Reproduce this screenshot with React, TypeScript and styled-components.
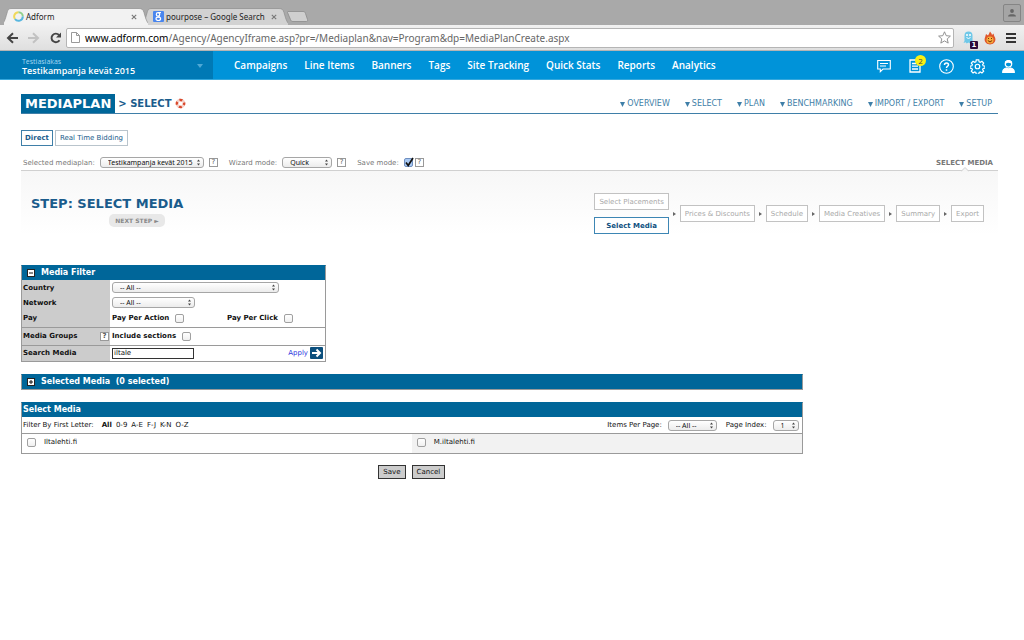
import React from "react";
import styled, { createGlobalStyle } from "styled-components";

const Global = createGlobalStyle`
  * { box-sizing: border-box; }
  body { margin: 0; background: #fff; color: #111; font-family: "DejaVu Sans", Verdana, sans-serif; font-size: 7px; line-height: 10px; }
  button, input, select { font: inherit; margin: 0; padding: 0; color: inherit; }
  a { color: inherit; text-decoration: none; }
`;

/* ---------- browser chrome ---------- */
const TabStrip = styled.div`
  display: flex;
  align-items: flex-end;
  height: 25px;
  padding-left: 4px;
  background: #a9a9a9;
  font-family: "Noto Sans", sans-serif;
  font-size: 8px;
`;
const TabShell = styled.div<{ $active?: boolean }>`
  position: relative;
  display: flex;
  align-items: center;
  width: 144px;
  height: 17px;
  padding: 0 11px 0 9px;
  margin-right: -4px;
  z-index: ${(p) => (p.$active ? 2 : 1)};
  color: #222;
`;
const TabShape = styled.svg`
  position: absolute;
  inset: 0;
  width: 100%;
  height: 100%;
  z-index: -1;
`;
const TabLabel = styled.span`
  flex: 1;
  margin-left: 2px;
  white-space: nowrap;
`;
const TabClose = styled.button`
  display: flex;
  border: 0;
  background: none;
`;
const NewTab = styled.button`
  display: flex;
  align-self: center;
  margin: 8px 0 0 3px;
  border: 0;
  background: none;
`;
const Profile = styled.button`
  display: flex;
  align-items: center;
  justify-content: center;
  width: 18px;
  height: 18px;
  margin: 0 3px 3px auto;
  border: 1px solid #858585;
  border-radius: 2px;
  background: #a5a5a5;
`;
const Toolbar = styled.div`
  display: flex;
  align-items: center;
  height: 26px;
  padding: 0 3px 0 6px;
  background: linear-gradient(#f1f1f1, #dfdfdf);
  border-bottom: 1px solid #b4b4b4;
`;
const IconButton = styled.button`
  display: flex;
  align-items: center;
  justify-content: center;
  width: 20px;
  height: 20px;
  border: 0;
  background: none;
`;
const Address = styled.div`
  display: flex;
  align-items: center;
  flex: 1;
  height: 20px;
  margin-right: 3px;
  padding: 0 2px 0 4px;
  border: 1px solid #b5b5b5;
  border-radius: 2px;
  background: #fff;
  font-family: "Noto Sans", sans-serif;
  font-size: 10px;
  line-height: 16px;
  color: #666;
`;
const Url = styled.a`
  flex: 1;
  margin-left: 5px;
  white-space: nowrap;
  b { font-weight: 400; color: #000; }
`;
const Extension = styled.button`
  position: relative;
  display: flex;
  align-items: center;
  justify-content: center;
  width: 22px;
  height: 20px;
  border: 0;
  background: none;
`;
const CountBadge = styled.span`
  position: absolute;
  right: 1px;
  bottom: -1px;
  width: 8px;
  height: 8px;
  border-radius: 1px;
  background: #2b0a3a;
  color: #fff;
  font-size: 7px;
  font-weight: 700;
  line-height: 8px;
  text-align: center;
`;

/* ---------- application header ---------- */
const Header = styled.header`
  display: flex;
  height: 29px;
  background: #0093d9;
  border-bottom: 1px solid #36a8dd;
  color: #fff;
  font-family: "Open Sans", sans-serif;
`;
const Account = styled.button`
  display: flex;
  align-items: center;
  justify-content: space-between;
  width: 213px;
  padding: 1px 10px 0 22px;
  border: 0;
  background: #0079b5;
  color: #fff;
  text-align: left;
`;
const AccountText = styled.span`
  display: flex;
  flex-direction: column;
  font-size: 9px;
  font-weight: 600;
  line-height: 9px;
  small { font-size: 7px; font-weight: 400; line-height: 9px; color: #a5d8f2; }
`;
const MainNav = styled.nav`
  display: flex;
  align-items: center;
  gap: 17px;
  padding-left: 21px;
  font-size: 10px;
  font-weight: 600;
  white-space: nowrap;
`;
const HeaderTools = styled.div`
  display: flex;
  align-items: center;
  gap: 11px;
  margin-left: auto;
  padding: 2px 6px 0 0;
`;
const Tool = styled(IconButton)`
  position: relative;
  color: #fff;
`;
const Notice = styled.span`
  position: absolute;
  top: -1px;
  right: -1px;
  width: 11px;
  height: 11px;
  border-radius: 50%;
  background: #f8f014;
  color: #444;
  font-size: 8px;
  line-height: 11px;
  text-align: center;
`;

/* ---------- page ---------- */
const Page = styled.main`
  padding: 14px 26px 20px 21px;
`;
const TitleBar = styled.div`
  display: flex;
  justify-content: space-between;
  align-items: flex-end;
  height: 20px;
  border-bottom: 1px solid #3f7fa8;
`;
const Title = styled.h1`
  display: flex;
  align-items: center;
  gap: 3px;
  margin: 0;
  font-size: 10px;
  line-height: 19px;
  color: #1a5c8c;
`;
const TitleTag = styled.span`
  padding: 0 4px;
  background: #006699;
  color: #fff;
  font-size: 13px;
`;
const SubNav = styled.nav`
  display: flex;
  gap: 15px;
  padding-right: 6px;
  line-height: 18px;
  font-size: 8px;
  color: #3f7fa8;
  a { display: flex; align-items: center; gap: 2px; }
`;
const Modes = styled.div`
  display: flex;
  gap: 2px;
  margin-top: 16px;
`;
const Mode = styled.button<{ $active?: boolean }>`
  height: 16px;
  padding: 0 ${(p) => (p.$active ? 3 : 4)}px;
  border: 1px solid ${(p) => (p.$active ? "#3f7fa8" : "#b9c4cc")};
  background: #fff;
  color: #1a5c8c;
  font-weight: ${(p) => (p.$active ? 700 : 400)};
`;
const Options = styled.div`
  display: flex;
  align-items: center;
  height: 25px;
  padding: 9px 5px 0 2px;
  border-bottom: 1px solid #d0d0d0;
  color: #777;
`;
const Option = styled.div`
  display: flex;
  align-items: center;
  gap: 5px;
  margin-right: 11px;
`;
const Crumb = styled.strong`
  position: relative;
  margin-left: auto;
  font-size: 7px;
`;
const Notch = styled.svg`
  position: absolute;
  left: 50%;
  top: 9px;
  margin-left: -4px;
`;
const Help = styled.button`
  width: 9px;
  height: 9px;
  border: 1px solid #999;
  background: #fff;
  color: #555;
  line-height: 7px;
`;
const SelectBox = styled.span<{ $width: number }>`
  position: relative;
  display: inline-flex;
  width: ${(p) => p.$width}px;
  select {
    width: 100%;
    height: 11px;
    padding: 0 7px;
    border: 1px solid #a6a6a6;
    border-radius: 3px;
    background: linear-gradient(#fff, #ececec);
    color: #111;
    appearance: none;
    font-family: "Noto Sans", sans-serif;
    font-size: 7px;
    font-weight: 400;
    line-height: 9px;
  }
  svg { position: absolute; right: 3px; top: 2px; pointer-events: none; }
`;
const Check = styled.input`
  width: 9px;
  height: 9px;
  border: 1px solid #a0a0a0;
  border-radius: 2px;
  background: linear-gradient(#fff, #f0f0f0);
  appearance: none;
`;
const TickBox = styled.span`
  position: relative;
  display: inline-flex;
  margin-right: -3px;
  input { border-color: #6f8fc0; background: #a9c9f3; }
  svg { position: absolute; left: 0; top: -1px; pointer-events: none; }
`;
const StepArea = styled.section`
  display: flex;
  justify-content: space-between;
  height: 94px;
  padding: 22px 14px 0 10px;
  background: linear-gradient(#f7f7f7, #fff 64px);
`;
const StepHead = styled.div`
  display: flex;
  flex-direction: column;
  align-items: center;
  h2 { margin: 3px 0 2px; font-size: 13px; line-height: 16px; color: #1a5c8c; }
`;
const NextStep = styled.button`
  height: 13px;
  margin-left: 60px;
  padding: 0 6px;
  border: 0;
  border-radius: 5px;
  background: #e8e8e8;
  color: #888;
  font-size: 6px;
  font-weight: 700;
`;
const Steps = styled.div`
  display: flex;
  align-items: center;
  gap: 4px;
  height: 41px;
`;
const StepStack = styled.div`
  display: flex;
  flex-direction: column;
  gap: 7px;
`;
const Step = styled.button<{ $active?: boolean }>`
  height: 17px;
  padding: 0 4px;
  border: 1px solid ${(p) => (p.$active ? "#3d86b4" : "#c2c2c2")};
  background: #fff;
  color: ${(p) => (p.$active ? "#0d4f80" : "#a8a8a8")};
  font-weight: ${(p) => (p.$active ? 700 : 400)};
  white-space: nowrap;
`;
const PanelHead = styled.h3<{ $inset?: boolean }>`
  display: flex;
  align-items: center;
  gap: 6px;
  height: 14px;
  margin: 0;
  padding-left: ${(p) => (p.$inset ? 5 : 1)}px;
  background: #006699;
  color: #fff;
  font-size: 8px;
  font-weight: 700;
  white-space: pre;
`;
const Toggle = styled.button`
  display: flex;
  border: 0;
  background: none;
`;
const FilterPanel = styled.section`
  width: 305px;
  border: 1px solid #9a9a9a;
  border-top-color: #006699;
`;
const FilterTable = styled.table`
  width: 100%;
  border-collapse: collapse;
  font-weight: 700;
  th { width: 88px; padding: 0 1px; background: #ccc; text-align: left; }
  td { padding: 0 2px; }
`;
const FilterRow = styled.tr<{ $height: number; $line?: boolean }>`
  height: ${(p) => p.$height}px;
  border-top: ${(p) => (p.$line ? "1px solid #9a9a9a" : "0")};
`;
const Between = styled.div`
  display: flex;
  align-items: center;
  justify-content: space-between;
`;
const Field = styled.label<{ $width?: number }>`
  display: inline-flex;
  align-items: center;
  gap: 6px;
  width: ${(p) => (p.$width ? `${p.$width}px` : "auto")};
`;
const SearchInput = styled.input`
  width: 82px;
  height: 11px;
  padding: 0 1px;
  border: 1px solid #333;
  background: #fff;
  font-weight: 400;
`;
const Apply = styled.button`
  display: flex;
  align-items: center;
  gap: 2px;
  border: 0;
  background: none;
  color: #2a35e0;
  font-weight: 400;
`;
const Wide = styled.section`
  width: 80%;
  margin-top: 12px;
  border: 1px solid #9a9a9a;
  border-top-color: #006699;
`;
const Letters = styled.div`
  display: flex;
  align-items: center;
  gap: 4px;
  height: 16px;
  padding: 0 3px 0 1px;
  b { margin-left: 4px; }
`;
const Paging = styled.div`
  display: flex;
  gap: 9px;
  margin-left: auto;
`;
const MediaTable = styled.table`
  width: 100%;
  border-collapse: collapse;
  border-top: 1px solid #9a9a9a;
  td { width: 50%; height: 19px; padding: 0 5px; }
  td + td { background: #f2f2f2; }
  label { gap: 8px; }
`;
const Actions = styled.div`
  display: flex;
  justify-content: center;
  gap: 6px;
  width: 80%;
  margin-top: 11px;
`;
const Action = styled.button`
  height: 14px;
  padding: 0 4px;
  border: 1px solid #333;
  background: #ccc;
  color: #111;
`;

function Picker({ label, options, width }: { label: string; options: string[]; width: number }) {
  return (
    <SelectBox $width={width}>
      <select aria-label={label}>
        {options.map((o) => <option key={o}>{o}</option>)}
      </select>
      <svg width="5" height="7" viewBox="0 0 5 7"><path d="M1 2.500 2.500.5 4 2.500zM1 4.500l1.500 2 1.500-2z" fill="#444" /></svg>
    </SelectBox>
  );
}

function BrowserTab({ label, active, icon }: { label: string; active?: boolean; icon: React.ReactNode }) {
  return (
    <TabShell $active={active}>
      <TabShape viewBox="0 0 144 17" preserveAspectRatio="none">
        <path d="M-4 17.5C0 16 1 12 3 5 4 1 5 .5 8 .5h127c3 0 4 1 5 4 2 7 3 11 7 13z" fill={active ? "#f2f2f2" : "#d2d2d2"} stroke="#8c8c8c" strokeWidth=".7" />
      </TabShape>
      {icon}
      <TabLabel>{label}</TabLabel>
      <TabClose aria-label={`Close ${label}`}>
        <svg width="6" height="6" viewBox="0 0 6 6"><path d="m.8.8 4.4 4.4m0-4.4L.8 5.2" stroke="#777" strokeWidth="1.1" /></svg>
      </TabClose>
    </TabShell>
  );
}

function PlusMinus({ plus }: { plus?: boolean }) {
  return (
    <svg width="8" height="8" viewBox="0 0 8 8">
      <rect width="8" height="8" fill="#222" />
      <rect x="1" y="1" width="6" height="6" fill="#fff" />
      <path d={plus ? "M2 4h4M4 2v4" : "M2 4h4"} stroke="#111" />
    </svg>
  );
}

const Arrow = () => <svg width="3" height="4" viewBox="0 0 3 4"><path d="M0 0l3 2-3 2z" fill="#666" /></svg>;

const NAV = ["Campaigns", "Line Items", "Banners", "Tags", "Site Tracking", "Quick Stats", "Reports", "Analytics"];
const SUB = ["OVERVIEW", "SELECT", "PLAN", "BENCHMARKING", "IMPORT / EXPORT", "SETUP"];
const STEPS = ["Prices & Discounts", "Schedule", "Media Creatives", "Summary", "Export"];

export default function App() {
  return (
    <>
      <Global />
      <TabStrip>
        <BrowserTab active label="Adform" icon={
          <svg width="11" height="11" viewBox="0 0 11 11" fill="none" strokeWidth="2">
            <path d="M2 8A4.3 4.3 0 0 1 5.5 1.2" stroke="#f0d95a" /><path d="M5.5 1.2A4.3 4.3 0 0 1 9.8 5.5" stroke="#8fd08a" /><path d="M9.8 5.5A4.3 4.3 0 0 1 2 8" stroke="#58b7e0" />
          </svg>} />
        <BrowserTab label="pourpose – Google Search" icon={
          <svg width="11" height="11" viewBox="0 0 11 11">
            <rect width="11" height="11" rx="1" fill="#4a86ee" />
            <g fill="none" stroke="#fff" strokeWidth="1.2"><circle cx="5" cy="3.4" r="1.7" /><ellipse cx="5.3" cy="7.8" rx="2.3" ry="1.7" /><path d="M5 1.6h3M5.6 5l.8 1.2" /></g>
          </svg>} />
        <NewTab aria-label="New tab">
          <svg width="22" height="11" viewBox="0 0 22 11"><path d="M1 .5h15c1.500 0 2 .5 2.500 2l2 6c.4 1.300 0 2-1 2H6c-1.500 0-2-.5-2.500-2l-3-7Q.3.600 1 .5z" fill="#cfcfcf" stroke="#8c8c8c" strokeWidth=".8" /></svg>
        </NewTab>
        <Profile aria-label="Profile">
          <svg width="10" height="10" viewBox="0 0 10 10" fill="#666"><circle cx="5" cy="3" r="1.9" /><path d="M1 8.500q0-2 2.500-2.300h3Q9 6.500 9 8.500z" /></svg>
        </Profile>
      </TabStrip>
      <Toolbar>
        <IconButton aria-label="Back">
          <svg width="20" height="12" viewBox="0 0 20 12" fill="none" stroke="#444" strokeWidth="2"><path d="M7 1.200 2 6l5 4.800M2.500 6H12" /></svg>
        </IconButton>
        <IconButton aria-label="Forward">
          <svg width="20" height="12" viewBox="0 0 20 12" fill="none" stroke="#c2c2c2" strokeWidth="2"><path d="m7 1.200 5 4.800-5 4.800M11.500 6H2" /></svg>
        </IconButton>
        <IconButton aria-label="Reload">
          <svg width="12" height="12" viewBox="0 0 12 12"><path d="M9.500 8.200A4.300 4.300 0 1 1 9 3" fill="none" stroke="#444" strokeWidth="1.900" /><path d="M11 .5v5H6z" fill="#444" /></svg>
        </IconButton>
        <Address>
          <svg width="9" height="11" viewBox="0 0 9 11"><path d="M.5.5h5l3 3v7h-8zM5.500.5v3h3" fill="#fff" stroke="#999" /></svg>
          <Url href="#"><b>www.adform.com</b>/Agency/AgencyIframe.asp?pr=/Mediaplan&amp;nav=Program&amp;dp=MediaPlanCreate.aspx</Url>
          <svg width="13" height="13" viewBox="0 0 13 13"><path d="m6.500.8 1.700 3.900 4.200.4-3.200 2.800 1 4.200-3.700-2.200-3.700 2.200 1-4.200L.6 5.100l4.200-.4z" fill="#fff" stroke="#888" strokeWidth=".9" /></svg>
        </Address>
        <Extension aria-label="Ghostery">
          <svg width="11" height="13" viewBox="0 0 11 13"><path d="M1.500 10V4.500a4 4 0 0 1 8 0V10l1.200 2-2.200-.5-1.500 1-1.500-1-1.800 1-1-1.300L.5 12z" fill="#6fc8e8" /><path d="M3.500 6.500q2 2 4 0" fill="none" stroke="#fff" /><circle cx="4" cy="4" r="1" fill="#fff" /><circle cx="7" cy="4" r="1" fill="#fff" /></svg>
          <CountBadge>1</CountBadge>
        </Extension>
        <Extension aria-label="Flame">
          <svg width="12" height="14" viewBox="0 0 12 14"><path d="M6 .5q2 2 2 3.500l1.500-1.500Q10 5 11 6.500c1.500 4-1.500 7-5 7s-6.500-3-5-7L2 3l2 1.500Q5 3 6 .5z" fill="#e0562a" /><circle cx="6" cy="9" r="3.500" fill="#f6b03c" /><path d="M3.800 9.500q2.200 3 4.400 0M4.500 7v1M7.500 7v1" fill="none" stroke="#7a2a10" /></svg>
        </Extension>
        <IconButton aria-label="Menu">
          <svg width="10" height="10" viewBox="0 0 10 10" stroke="#333" strokeWidth="2"><path d="M0 1h10M0 5h10M0 9h10" /></svg>
        </IconButton>
      </Toolbar>
      <Header>
        <Account>
          <AccountText><small>Testiasiakas</small>Testikampanja kevät 2015</AccountText>
          <svg width="6" height="4" viewBox="0 0 6 4"><path d="M0 0h6L3 4z" fill="#4fa9d6" /></svg>
        </Account>
        <MainNav>{NAV.map((n) => <a href="#" key={n}>{n}</a>)}</MainNav>
        <HeaderTools>
          <Tool aria-label="Messages"><svg width="14" height="14" viewBox="0 0 14 14" fill="none" stroke="currentColor" strokeWidth="1.100"><path d="M.7 1.500h12.600v8.500H6L3.300 12.600V10H.7zM3 4.500h8M3 7h6" /></svg></Tool>
          <Tool aria-label="Reports"><svg width="12" height="14" viewBox="0 0 12 14" fill="none" stroke="currentColor" strokeWidth="1.300"><path d="M8 1H1v12h10V4M3 4.500h4M3 7.200h6M3 10h6" /></svg><Notice>2</Notice></Tool>
          <Tool aria-label="Help"><svg width="15" height="15" viewBox="0 0 15 15" fill="none" stroke="currentColor" strokeWidth="1.100"><circle cx="7.500" cy="7.500" r="6.800" /><path d="M5.500 6c0-2.700 4-2.500 4-.2C9.500 7.300 7.500 7.300 7.500 9M7.500 10.300v1.400" strokeWidth="1.500" /></svg></Tool>
          <Tool aria-label="Settings"><svg width="15" height="15" viewBox="0 0 24 24" fill="none" stroke="currentColor" strokeWidth="1.900"><circle cx="12" cy="12" r="3.600" /><path d="M10 1.500h4l.6 3 1.900.8 2.600-1.700 2.800 2.800-1.700 2.600.8 1.900 3 .6v3l-3 .6-.8 1.900 1.700 2.600-2.800 2.800-2.600-1.700-1.900.8-.6 3h-4l-.6-3-1.900-.8-2.600 1.700-2.800-2.800 1.700-2.600-.8-1.900-3-.6v-3l3-.6.8-1.900-1.700-2.600 2.800-2.800 2.600 1.700 1.900-.8z" /></svg></Tool>
          <Tool aria-label="User"><svg width="13" height="13" viewBox="0 0 13 13" fill="none" stroke="currentColor" strokeWidth="1.200"><circle cx="6.500" cy="4" r="3.200" /><path d="M3.500 3.500Q5 1 9.500 3V2Q6.500-1 3.500 2z" fill="currentColor" /><path d="M.7 12.300q0-3.500 3.500-4.300 2.300 1.600 4.600 0 3.500.8 3.500 4.300z" fill="currentColor" /></svg></Tool>
        </HeaderTools>
      </Header>
      <Page>
        <TitleBar>
          <Title><TitleTag>MEDIAPLAN</TitleTag>&gt; SELECT
            <svg width="11" height="11" viewBox="0 0 11 11" fill="none" strokeWidth="2.500"><circle cx="5.500" cy="5.500" r="3.600" stroke="#f3cfc8" /><circle cx="5.500" cy="5.500" r="3.600" stroke="#d9492c" strokeDasharray="3 2.650" strokeDashoffset="1.500" /></svg>
          </Title>
          <SubNav>{SUB.map((s) => <a href="#" key={s}><svg width="5" height="5" viewBox="0 0 5 5"><path d="M0 0h5L2.500 5z" fill="#3f7fa8" /></svg>{s}</a>)}</SubNav>
        </TitleBar>
        <Modes><Mode $active>Direct</Mode><Mode>Real Time Bidding</Mode></Modes>
        <Options>
          <Option>Selected mediaplan: <Picker label="Selected mediaplan" options={["Testikampanja kevät 2015"]} width={104} /><Help>?</Help></Option>
          <Option>Wizard mode: <Picker label="Wizard mode" options={["Quick"]} width={50} /><Help>?</Help></Option>
          <Option><label htmlFor="save-mode">Save mode:</label>
            <TickBox><Check id="save-mode" type="checkbox" defaultChecked /><svg width="10" height="10" viewBox="0 0 10 10"><path d="m2 5.500 2.200 3L9 1" fill="none" stroke="#111" strokeWidth="1.700" /></svg></TickBox><Help>?</Help></Option>
          <Crumb>SELECT MEDIA<Notch width="8" height="5" viewBox="0 0 8 5"><path d="M0 4.500 4 .5l4 4" fill="#f5f5f5" stroke="#d0d0d0" /></Notch></Crumb>
        </Options>
        <StepArea>
          <StepHead><h2>STEP: SELECT MEDIA</h2><NextStep>NEXT STEP ►</NextStep></StepHead>
          <Steps>
            <StepStack><Step>Select Placements</Step><Step $active>Select Media</Step></StepStack>
            {STEPS.map((s) => <React.Fragment key={s}><Arrow /><Step>{s}</Step></React.Fragment>)}
          </Steps>
        </StepArea>
        <FilterPanel>
          <PanelHead $inset><Toggle aria-label="Collapse"><PlusMinus /></Toggle>Media Filter</PanelHead>
          <FilterTable>
            <tbody>
              <FilterRow $height={15}><th>Country</th><td><Between><Picker label="Country" options={["-- All --"]} width={167} /></Between></td></FilterRow>
              <FilterRow $height={15}><th>Network</th><td><Between><Picker label="Network" options={["-- All --"]} width={83} /></Between></td></FilterRow>
              <FilterRow $height={17}><th>Pay</th><td><Field $width={115}>Pay Per Action <Check type="checkbox" /></Field><Field>Pay Per Click <Check type="checkbox" /></Field></td></FilterRow>
              <FilterRow $height={18} $line><th><Between>Media Groups <Help>?</Help></Between></th><td><Field>Include sections <Check type="checkbox" /></Field></td></FilterRow>
              <FilterRow $height={16} $line><th><label htmlFor="search">Search Media</label></th><td><Between><SearchInput id="search" defaultValue="iltale" /><Apply>Apply <svg width="13" height="12" viewBox="0 0 13 12"><rect width="13" height="12" rx="1" fill="#0b4f7d" /><path d="M2 6h7M6.500 2.500 10 6 6.500 9.500" fill="none" stroke="#fff" strokeWidth="2" /></svg></Apply></Between></td></FilterRow>
            </tbody>
          </FilterTable>
        </FilterPanel>
        <Wide>
          <PanelHead $inset><Toggle aria-label="Expand"><PlusMinus plus /></Toggle>{"Selected Media  (0 selected)"}</PanelHead>
        </Wide>
        <Wide>
          <PanelHead>Select Media</PanelHead>
          <Letters>Filter By First Letter: <b>All</b>{["0-9", "A-E", "F-J", "K-N", "O-Z"].map((l) => <a href="#" key={l}>{l}</a>)}
            <Paging><Field>Items Per Page: <Picker label="Items per page" options={["-- All --"]} width={49} /></Field><Field>Page Index: <Picker label="Page index" options={["1"]} width={26} /></Field></Paging>
          </Letters>
          <MediaTable>
            <tbody><tr><td><Field><Check type="checkbox" />Iltalehti.fi</Field></td><td><Field><Check type="checkbox" />M.iltalehti.fi</Field></td></tr></tbody>
          </MediaTable>
        </Wide>
        <Actions><Action>Save</Action><Action>Cancel</Action></Actions>
      </Page>
    </>
  );
}
